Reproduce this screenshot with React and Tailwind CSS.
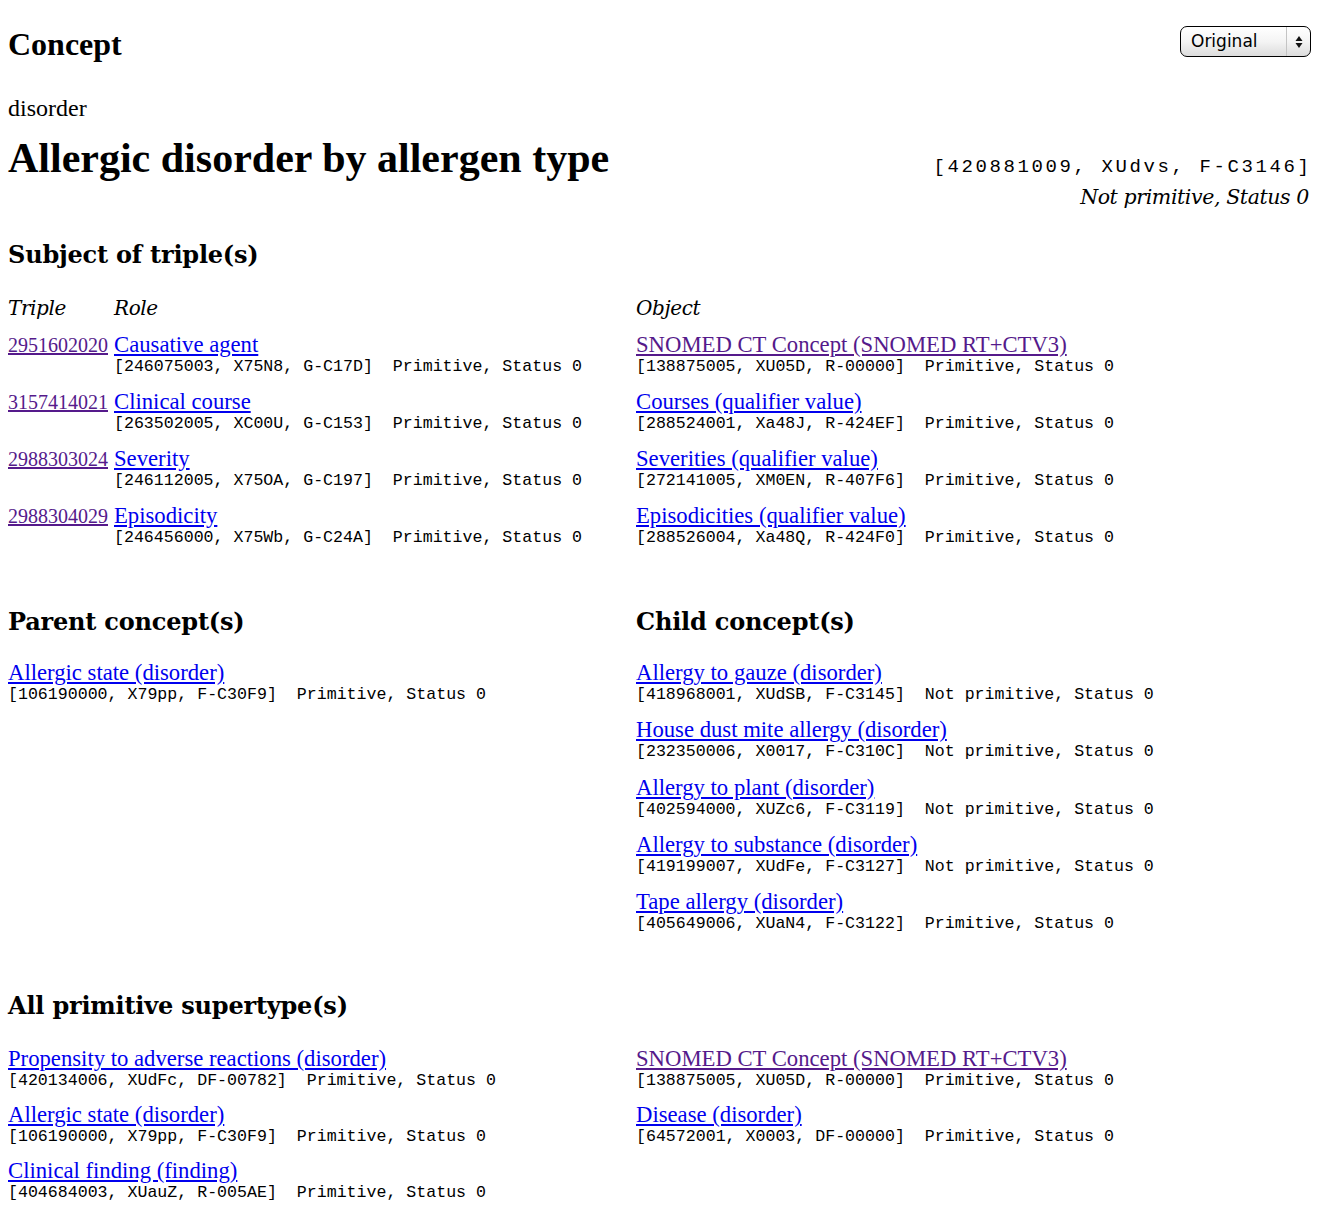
const LINK = "text-[#0000ee] underline";
const VISITED = "text-[#551a8b] underline";
const MONO = "font-['Liberation_Mono','Courier_New',monospace]";
const GEORGIA = "font-['DejaVu_Serif','Liberation_Serif',serif]";

const triples = [
  {
    id: '2951602020',
    role: 'Causative agent',
    roleCode: '[246075003, X75N8, G-C17D]',
    obj: 'SNOMED CT Concept (SNOMED RT+CTV3)',
    objVisited: true,
    objCode: '[138875005, XU05D, R-00000]',
  },
  {
    id: '3157414021',
    role: 'Clinical course',
    roleCode: '[263502005, XC00U, G-C153]',
    obj: 'Courses (qualifier value)',
    objCode: '[288524001, Xa48J, R-424EF]',
  },
  {
    id: '2988303024',
    role: 'Severity',
    roleCode: '[246112005, X75OA, G-C197]',
    obj: 'Severities (qualifier value)',
    objCode: '[272141005, XM0EN, R-407F6]',
  },
  {
    id: '2988304029',
    role: 'Episodicity',
    roleCode: '[246456000, X75Wb, G-C24A]',
    obj: 'Episodicities (qualifier value)',
    objCode: '[288526004, Xa48Q, R-424F0]',
  },
];

const parents = [
  { name: 'Allergic state (disorder)', code: '[106190000, X79pp, F-C30F9]', status: 'Primitive, Status 0' },
];

const children = [
  { name: 'Allergy to gauze (disorder)', code: '[418968001, XUdSB, F-C3145]', status: 'Not primitive, Status 0' },
  { name: 'House dust mite allergy (disorder)', code: '[232350006, X0017, F-C310C]', status: 'Not primitive, Status 0' },
  { name: 'Allergy to plant (disorder)', code: '[402594000, XUZc6, F-C3119]', status: 'Not primitive, Status 0' },
  { name: 'Allergy to substance (disorder)', code: '[419199007, XUdFe, F-C3127]', status: 'Not primitive, Status 0' },
  { name: 'Tape allergy (disorder)', code: '[405649006, XUaN4, F-C3122]', status: 'Primitive, Status 0' },
];

const supersLeft = [
  { name: 'Propensity to adverse reactions (disorder)', code: '[420134006, XUdFc, DF-00782]', status: 'Primitive, Status 0' },
  { name: 'Allergic state (disorder)', code: '[106190000, X79pp, F-C30F9]', status: 'Primitive, Status 0' },
  { name: 'Clinical finding (finding)', code: '[404684003, XUauZ, R-005AE]', status: 'Primitive, Status 0' },
];

const supersRight = [
  { name: 'SNOMED CT Concept (SNOMED RT+CTV3)', code: '[138875005, XU05D, R-00000]', status: 'Primitive, Status 0', visited: true },
  { name: 'Disease (disorder)', code: '[64572001, X0003, DF-00000]', status: 'Primitive, Status 0' },
];

function Code({ code, status }) {
  return (
    <div className={`${MONO} text-[16.6px] leading-[20px] whitespace-pre`}>
      {code}{'  '}{status}
    </div>
  );
}

function ConceptItem({ name, code, status, visited }) {
  return (
    <div>
      <div className="text-[22.7px] leading-[24px]">
        <a href="#" className={visited ? VISITED : LINK}>{name}</a>
      </div>
      <Code code={code} status={status} />
    </div>
  );
}

function Heading({ children, className = '' }) {
  return (
    <h2 className={`${GEORGIA} font-bold text-[24px] leading-[30px] tracking-[-0.2px] ${className}`}>
      {children}
    </h2>
  );
}

function FakeSelect() {
  return (
    <div className="flex items-center w-[131px] h-[31px] rounded-[7px] border-[1.5px] border-black bg-linear-to-b from-white via-[#f4f4f4] to-[#dcdcdc] shadow-[inset_0_1px_0_#fff]">
      <span className="pl-[10px] font-['DejaVu_Sans',sans-serif] text-[17px] leading-none">Original</span>
      <div className="ml-auto h-full w-[24px] border-l border-[#c4c4c4] flex items-center justify-center">
        <svg width="8" height="14" viewBox="0 0 8 14">
          <polygon points="4,1 7.5,6 0.5,6" fill="#111" />
          <polygon points="0.5,8 7.5,8 4,13" fill="#111" />
        </svg>
      </div>
    </div>
  );
}

export default function App() {
  return (
    <div className="min-h-screen bg-white text-black font-['Liberation_Serif','Times_New_Roman',serif] pl-2 pr-[17px] pt-[26px] pb-[26px]">
      <div className="flex justify-between items-start">
        <h1 className="text-[32px] leading-[36px] font-bold">Concept</h1>
        <FakeSelect />
      </div>

      <div className="mt-[32px] text-[24px] leading-[28px]">disorder</div>

      <div className="mt-[12px] flex justify-between items-baseline">
        <h1 className="text-[42px] leading-[48px] font-bold">Allergic disorder by allergen type</h1>
        <div className="text-right">
          <div className={`${MONO} text-[19px] leading-[24px] tracking-[2.6px] mr-[-0.6px] whitespace-pre`}>
            [420881009, XUdvs, F-C3146]
          </div>
          <div className={`${GEORGIA} italic text-[20.5px] leading-[28px] mt-[4px] tracking-[-0.4px] mr-[2px]`}>
            Not primitive, Status 0
          </div>
        </div>
      </div>

      <Heading className="mt-[29px]">Subject of triple(s)</Heading>

      <div className="mt-[26px] grid grid-cols-[106px_522px_1fr] gap-y-[13px]">
        <div className={`${GEORGIA} italic text-[20px] leading-[24px] tracking-[-0.4px]`}>Triple</div>
        <div className={`${GEORGIA} italic text-[20px] leading-[24px] tracking-[-0.4px]`}>Role</div>
        <div className={`${GEORGIA} italic text-[20px] leading-[24px] tracking-[-0.4px]`}>Object</div>
        {triples.map((t) => (
          <div key={t.id} className="contents">
            <div className="text-[20px] leading-[24px]">
              <a href="#" className={VISITED}>{t.id}</a>
            </div>
            <ConceptItem name={t.role} code={t.roleCode} status="Primitive, Status 0" />
            <ConceptItem name={t.obj} code={t.objCode} status="Primitive, Status 0" visited={t.objVisited} />
          </div>
        ))}
      </div>

      <div className="mt-[59px] grid grid-cols-[628px_1fr]">
        <div>
          <Heading>Parent concept(s)</Heading>
          <div className="mt-[24px] flex flex-col gap-[13.25px]">
            {parents.map((p) => (
              <ConceptItem key={p.code} {...p} />
            ))}
          </div>
        </div>
        <div>
          <Heading>Child concept(s)</Heading>
          <div className="mt-[24px] flex flex-col gap-[13.25px]">
            {children.map((c) => (
              <ConceptItem key={c.code} {...c} />
            ))}
          </div>
        </div>
      </div>

      <Heading className="mt-[57px]">All primitive supertype(s)</Heading>

      <div className="mt-[26px] grid grid-cols-[628px_1fr]">
        <div className="flex flex-col gap-[12px]">
          {supersLeft.map((s) => (
            <ConceptItem key={s.code} {...s} />
          ))}
        </div>
        <div className="flex flex-col gap-[12px]">
          {supersRight.map((s) => (
            <ConceptItem key={s.code} {...s} />
          ))}
        </div>
      </div>
    </div>
  );
}
